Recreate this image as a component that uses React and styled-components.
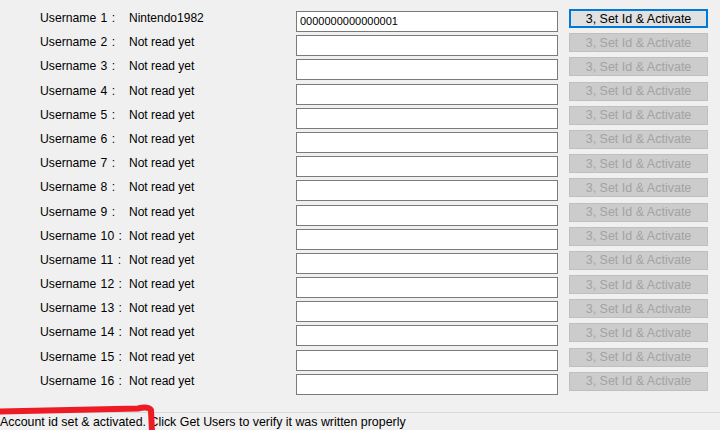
import React from "react";
import styled, { createGlobalStyle } from "styled-components";

const Global = createGlobalStyle`
  html, body { margin: 0; padding: 0; background: #f0f0f0; }
  #root { width: 720px; height: 430px; overflow: hidden; }
`;

const Window = styled.div`
  position: relative;
  width: 720px;
  height: 430px;
  display: flex;
  flex-direction: column;
  background: #f0f0f0;
  font-family: "Liberation Sans", Arial, sans-serif;
  font-size: 12px;
  color: #000;
`;

const Rows = styled.div`
  flex: 1;
  padding-top: 8px;
  display: flex;
  flex-direction: column;
`;

const Row = styled.div`
  height: 24.2px;
  display: grid;
  grid-template-columns: 89px 167px 262px 139px;
  padding-left: 40px;
  align-items: start;
`;

const Label = styled.span`
  padding-top: 1px;
  line-height: 19px;
  font-size: 12.2px;
  white-space: nowrap;
  word-spacing: 1px;
`;

const Value = styled.span`
  padding-top: 1px;
  line-height: 19px;
  white-space: nowrap;
`;

const TextBox = styled.div`
  box-sizing: border-box;
  margin-top: 3px;
  height: 21px;
  width: 262px;
  background: #fff;
  border: 1px solid #7a7a7a;
  font-size: 11px;
  line-height: 19px;
  padding-left: 3px;
`;

const Button = styled.div`
  box-sizing: border-box;
  margin-top: 1px;
  margin-left: 11px;
  width: 139px;
  height: 19px;
  display: flex;
  align-items: center;
  justify-content: center;
  font-size: 12.5px;
  background: ${(p) => (p.$disabled ? "#cccccc" : "#e1e1e1")};
  border: ${(p) => (p.$disabled ? "1px solid #bfbfbf" : "2px solid #0078d7")};
  color: ${(p) => (p.$disabled ? "#a3a3a3" : "#000")};
`;

const StatusBar = styled.div`
  box-sizing: border-box;
  height: 18px;
  border-top: 1px solid #d9d9d9;
  padding-top: 2px;
  font-size: 12.4px;
  line-height: 15px;
  white-space: nowrap;
  overflow: hidden;
`;

const Scribble = styled.svg`
  position: absolute;
  left: 0;
  top: 400px;
  pointer-events: none;
`;

const rows = Array.from({ length: 16 }, (_, i) => ({
  n: i + 1,
  name: i === 0 ? "Nintendo1982" : "Not read yet",
  id: i === 0 ? "0000000000000001" : "",
}));

export default function App() {
  return (
    <>
      <Global />
      <Window>
        <Rows>
          {rows.map((r) => (
            <Row key={r.n}>
              <Label>Username {r.n} :</Label>
              <Value>{r.name}</Value>
              <TextBox>{r.id}</TextBox>
              <Button $disabled={r.n !== 1}>3, Set Id &amp; Activate</Button>
            </Row>
          ))}
        </Rows>
        <StatusBar>
          Account id set &amp; activated. Click Get Users to verify it was written properly
        </StatusBar>
        <Scribble width="170" height="30" viewBox="0 0 170 30">
          <path
            d="M-2,11.5 Q60,10 138,8.5 Q148,6 151,10 L152,32"
            fill="none"
            stroke="#ed1c24"
            strokeWidth="6"
            strokeLinecap="round"
            strokeLinejoin="round"
          />
        </Scribble>
      </Window>
    </>
  );
}
